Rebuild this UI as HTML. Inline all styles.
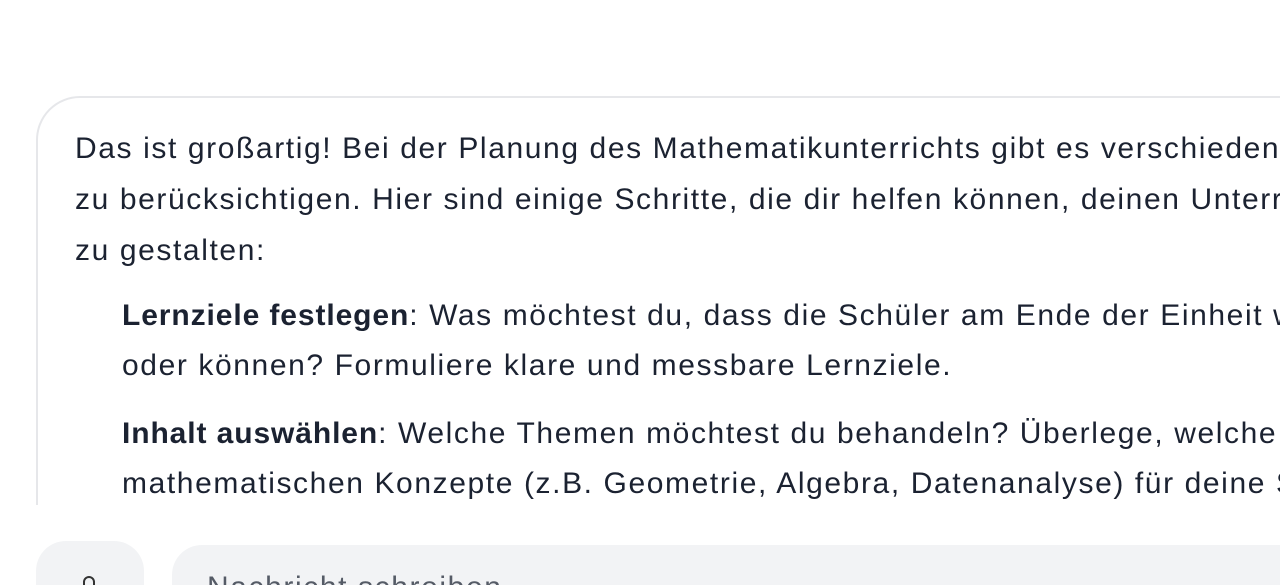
<!DOCTYPE html>
<html><head><meta charset="utf-8"><style>
html,body{margin:0;width:1280px;height:585px;overflow:hidden;background:#fff}
body{font-family:"Liberation Sans",sans-serif;color:#1b2231;position:relative}
.clip{position:absolute;left:0;top:0;width:1280px;height:505px;overflow:hidden}
.card{position:absolute;left:36px;top:96px;width:1400px;height:600px;border:2px solid #e6e7ea;border-radius:44px;box-sizing:border-box}
.l{position:absolute;white-space:nowrap;font-size:30px;line-height:50px;letter-spacing:1.6px}
b{font-weight:bold;letter-spacing:0.9px}
.btn{position:absolute;left:36px;top:541px;width:108px;height:80px;background:#f2f3f5;border-radius:30px}
.mic{position:absolute;left:83px;top:576px;width:8px;height:14px;border:2.5px solid #333;border-radius:6px}
.inp{position:absolute;left:172px;top:545px;width:1200px;height:80px;background:#f2f3f5;border-radius:30px}
.ph{position:absolute;left:207px;top:568px;font-size:30px;line-height:40px;letter-spacing:1.6px;color:#555b66;white-space:nowrap}
</style></head><body>
<div class="clip">
<div class="card"></div>
<div class="l" style="left:75px;top:124px">Das ist großartig! Bei der Planung des Mathematikunterrichts gibt es verschiedene</div>
<div class="l" style="left:75px;top:175px">zu berücksichtigen. Hier sind einige Schritte, die dir helfen können, deinen Unterricht</div>
<div class="l" style="left:75px;top:226px">zu gestalten:</div>
<div class="l" style="left:122px;top:291px"><b>Lernziele festlegen</b>: Was möchtest du, dass die Schüler am Ende der Einheit wissen</div>
<div class="l" style="left:122px;top:341px">oder können? Formuliere klare und messbare Lernziele.</div>
<div class="l" style="left:122px;top:409px"><b>Inhalt auswählen</b>: Welche Themen möchtest du behandeln? Überlege, welche</div>
<div class="l" style="left:122px;top:459px">mathematischen Konzepte (z.B. Geometrie, Algebra, Datenanalyse) für deine Schüler</div>
</div>
<div class="btn"></div>
<div class="mic"></div>
<div class="inp"></div>
<div class="ph">Nachricht schreiben...</div>
</body></html>
